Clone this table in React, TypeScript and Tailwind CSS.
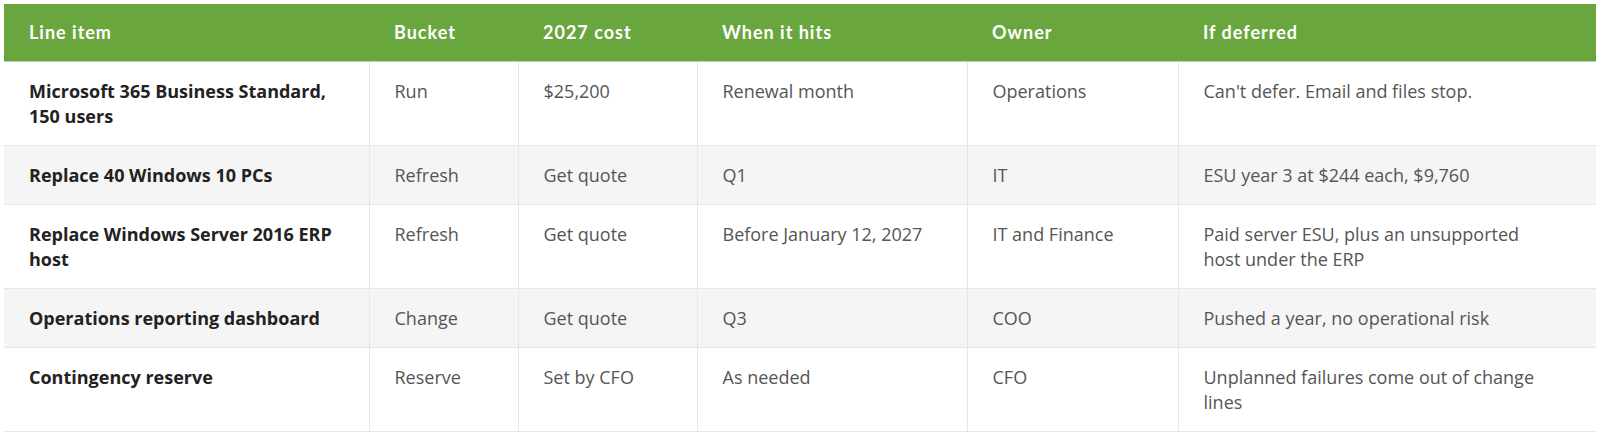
const rows = [
  {
    item: "Microsoft 365 Business Standard, 150 users",
    bucket: "Run",
    cost: "$25,200",
    when: "Renewal month",
    owner: "Operations",
    deferred: "Can't defer. Email and files stop.",
  },
  {
    item: "Replace 40 Windows 10 PCs",
    bucket: "Refresh",
    cost: "Get quote",
    when: "Q1",
    owner: "IT",
    deferred: "ESU year 3 at $244 each, $9,760",
  },
  {
    item: "Replace Windows Server 2016 ERP host",
    bucket: "Refresh",
    cost: "Get quote",
    when: "Before January 12, 2027",
    owner: "IT and Finance",
    deferred: "Paid server ESU, plus an unsupported host under the ERP",
  },
  {
    item: "Operations reporting dashboard",
    bucket: "Change",
    cost: "Get quote",
    when: "Q3",
    owner: "COO",
    deferred: "Pushed a year, no operational risk",
  },
  {
    item: "Contingency reserve",
    bucket: "Reserve",
    cost: "Set by CFO",
    when: "As needed",
    owner: "CFO",
    deferred: "Unplanned failures come out of change lines",
  },
];

const headers = ["Line item", "Bucket", "2027 cost", "When it hits", "Owner", "If deferred"];
const widths = ["w-[365px]", "w-[149px]", "w-[179px]", "w-[270px]", "w-[211px]", "w-[418px]"];

export default function App() {
  return (
    <div className="bg-white min-h-screen pt-[4px] px-[4px]">
      <table className="table-fixed border-collapse w-[1592px] font-['Open_Sans',sans-serif] text-[18px] leading-[25px]">
        <thead>
          <tr className="bg-[#6aa63e]">
            {headers.map((h, i) => (
              <th
                key={h}
                className={`${widths[i]} h-[57px] px-[25px] text-left align-middle text-white font-bold text-[18px] tracking-[1px] font-['Lato',sans-serif] border-b border-[#b9d6a4]`}
              >
                {h}
              </th>
            ))}
          </tr>
        </thead>
        <tbody>
          {rows.map((r, idx) => {
            const cells = [r.item, r.bucket, r.cost, r.when, r.owner, r.deferred];
            return (
              <tr
                key={r.item}
                className={`${idx % 2 === 1 ? "bg-[#f5f5f5]" : "bg-white"} border-b border-[#e6e6e6]`}
              >
                {cells.map((c, i) => (
                  <td
                    key={i}
                    className={`pl-[25px] pt-[17px] pb-[16px] align-top ${
                      i === 5 ? "pr-[45px]" : "pr-[25px]"
                    } ${
                      i > 0 ? "border-l border-[#e6e6e6] text-[#555555]" : "font-bold text-[#222222]"
                    }`}
                  >
                    {c}
                  </td>
                ))}
              </tr>
            );
          })}
        </tbody>
      </table>
    </div>
  );
}
